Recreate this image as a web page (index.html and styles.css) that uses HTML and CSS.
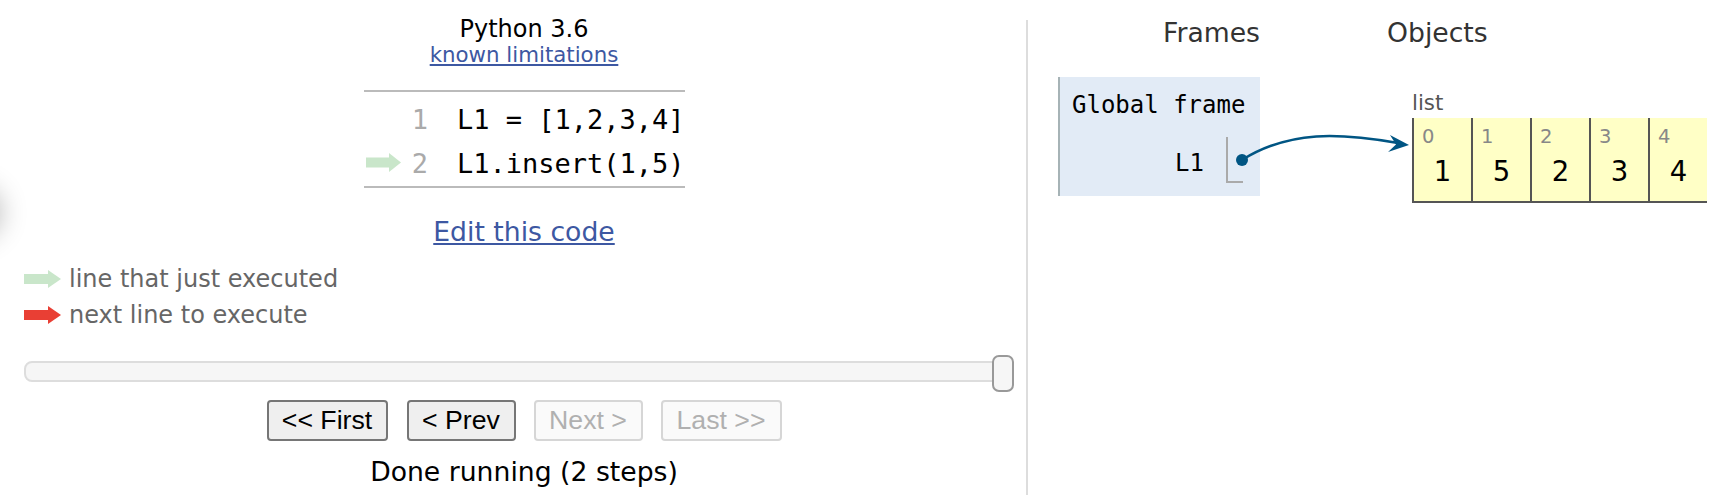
FILE: index.html
```html
<!DOCTYPE html>
<html>
<head>
<meta charset="utf-8">
<link rel="stylesheet" href="styles.css">
</head>
<body>
<div class="shadow-blob"></div>
<div class="page">
  <section class="left">
    <div class="lang">Python 3.6</div>
    <a class="limits" href="#">known limitations</a>
    <div class="code">
      <div class="code-row">
        <span class="gutter"></span>
        <span class="lineno">1</span>
        <span class="src">L1 = [1,2,3,4]</span>
      </div>
      <div class="code-row">
        <span class="gutter">
          <svg class="code-arrow" width="35" height="19" viewBox="0 0 35 19"><rect x="0" y="4.5" width="24" height="10" fill="#c9e6ca"/><polygon points="23,0 35,9.5 23,19" fill="#c9e6ca"/></svg>
        </span>
        <span class="lineno">2</span>
        <span class="src">L1.insert(1,5)</span>
      </div>
    </div>
    <a class="edit" href="#">Edit this code</a>
    <div class="legend">
      <div class="legend-item">
        <svg width="37" height="18" viewBox="0 0 37 18"><rect x="0" y="4" width="25" height="10" fill="#c9e6ca"/><polygon points="24,0 37,9 24,18" fill="#c9e6ca"/></svg>
        <span>line that just executed</span>
      </div>
      <div class="legend-item">
        <svg width="37" height="18" viewBox="0 0 37 18"><rect x="0" y="4" width="25" height="10" fill="#e93f34"/><polygon points="24,0 37,9 24,18" fill="#e93f34"/></svg>
        <span>next line to execute</span>
      </div>
    </div>
    <div class="slider">
      <div class="track"></div>
      <div class="handle"></div>
    </div>
    <div class="buttons">
      <button class="btn btn-wide first">&lt;&lt; First</button>
      <button class="btn btn-narrow">&lt; Prev</button>
      <button class="btn btn-narrow disabled" disabled>Next &gt;</button>
      <button class="btn btn-wide disabled" disabled>Last &gt;&gt;</button>
    </div>
    <div class="status">Done running (2 steps)</div>
  </section>
  <div class="divider"></div>
  <section class="viz">
    <div class="frames-col">
      <div class="col-head">Frames</div>
      <div class="frame">
        <div class="frame-title">Global frame</div>
        <div class="var-row">
          <span class="var-name">L1</span>
          <span class="var-ptr"></span>
        </div>
      </div>
    </div>
    <div class="objects-col">
      <div class="col-head">Objects</div>
      <div class="heap">
        <div class="type-label">list</div>
        <div class="list">
          <div class="cell"><span class="idx">0</span><span class="val">1</span></div>
          <div class="cell"><span class="idx">1</span><span class="val">5</span></div>
          <div class="cell"><span class="idx">2</span><span class="val">2</span></div>
          <div class="cell"><span class="idx">3</span><span class="val">3</span></div>
          <div class="cell"><span class="idx">4</span><span class="val">4</span></div>
        </div>
      </div>
    </div>
  </section>
</div>
<svg class="connector" width="1726" height="495" viewBox="0 0 1726 495">
  <path d="M1242,160 C1290,130 1340,133 1398,143" fill="none" stroke="#005583" stroke-width="2.6"/>
  <polygon points="1409,145 1390,135 1396,144.5 1388,152" fill="#005583"/>
  <circle cx="1242" cy="160" r="6" fill="#005583"/>
</svg>
</body>
</html>
```

FILE: styles.css
```css
html, body {
  margin: 0;
  padding: 0;
}

body {
  position: relative;
  width: 1726px;
  height: 495px;
  overflow: hidden;
  background: #ffffff;
  color: #000000;
  font-family: "DejaVu Sans", Verdana, sans-serif;
}

.shadow-blob {
  position: absolute;
  left: -70px;
  top: 185px;
  width: 70px;
  height: 55px;
  border-radius: 50%;
  background: #ffffff;
  box-shadow: 0 0 28px rgba(0, 0, 0, 0.3);
}

.page {
  display: flex;
  height: 495px;
}

/* ---------- left pane ---------- */
.left {
  margin-left: 24px;
  width: 1000px;
  display: flex;
  flex-direction: column;
  align-items: center;
  padding-top: 15px;
}

.lang {
  font-size: 24px;
  line-height: 28px;
}

.limits {
  font-size: 21.33px;
  line-height: 24px;
  color: #3d58a2;
  text-decoration: underline;
}

.code {
  margin-top: 23px;
  width: 321px;
  border-top: 2px solid #bbbbbb;
  border-bottom: 2px solid #bbbbbb;
  padding-top: 6px;
  font-family: "DejaVu Sans Mono", monospace;
  font-size: 27px;
  line-height: 44px;
}

.code-row {
  display: flex;
  align-items: center;
  height: 44px;
}

.gutter {
  width: 48px;
  box-sizing: border-box;
  padding-left: 2px;
  display: flex;
  align-items: center;
}

.code-arrow {
  display: block;
  margin-top: -4px;
}

.lineno {
  width: 17px;
  text-align: right;
  color: #aaaaaa;
}

.src {
  margin-left: 29px;
  white-space: pre;
}

.edit {
  margin-top: 28px;
  font-size: 26.67px;
  line-height: 32px;
  color: #3d58a2;
  text-decoration: underline;
}

.legend {
  align-self: flex-start;
  margin-top: 13px;
  font-size: 24px;
  line-height: 36px;
  color: #666666;
}

.legend-item {
  display: flex;
  align-items: center;
  gap: 8px;
}

.legend-item svg {
  display: block;
}

.slider {
  align-self: flex-start;
  position: relative;
  margin-top: 28px;
  width: 980px;
  height: 21px;
}

.track {
  height: 21px;
  box-sizing: border-box;
  border: 2px solid #dddddd;
  border-radius: 8px;
  background: #f6f6f6;
}

.handle {
  position: absolute;
  right: -10px;
  top: -6px;
  width: 22px;
  height: 37px;
  box-sizing: border-box;
  border: 2px solid #999999;
  border-radius: 7px;
  background: #f6f6f6;
}

.buttons {
  margin-top: 18px;
  display: flex;
  gap: 18px;
}

.btn {
  height: 41px;
  box-sizing: border-box;
  padding: 0;
  text-align: center;
  font-family: "Liberation Sans", Arial, sans-serif;
  font-size: 26.67px;
  border: 2px solid #767676;
  border-radius: 4px;
  background: #efefef;
  color: #000000;
}

.btn-wide {
  width: 121px;
}

.btn-narrow {
  width: 109px;
}

.btn.first {
  margin-right: 1px;
}

.btn.disabled {
  border-color: #d6d6d6;
  background: #fafafa;
  color: #b0b0b0;
}

.status {
  margin-top: 15px;
  font-size: 26.67px;
  line-height: 32px;
}

/* ---------- divider ---------- */
.divider {
  width: 2px;
  margin-left: 2px;
  margin-top: 20px;
  background: #dddddd;
}

/* ---------- visualization ---------- */
.viz {
  display: flex;
  padding-top: 17px;
}

.col-head {
  font-size: 26.67px;
  line-height: 32px;
  color: #333333;
}

.frames-col {
  padding-left: 30px;
  width: 202px;
}

.frames-col .col-head {
  text-align: right;
}

.frame {
  margin-top: 28px;
  background: #e2ebf6;
  border-left: 2px solid #a6b3b6;
  padding: 13px 0 13px 12px;
}

.frame-title {
  font-family: "DejaVu Sans Mono", monospace;
  font-size: 24px;
  line-height: 30px;
}

.var-row {
  display: flex;
  justify-content: flex-end;
  align-items: flex-start;
  margin-top: 17px;
  padding-right: 17px;
}

.var-name {
  font-family: "DejaVu Sans Mono", monospace;
  font-size: 24px;
  line-height: 30px;
  padding-top: 11px;
  margin-right: 22px;
}

.var-ptr {
  width: 15px;
  height: 44px;
  border-left: 2px solid #aaaaaa;
  border-bottom: 2px solid #aaaaaa;
}

.objects-col {
  margin-left: 127px;
}

.heap {
  margin-top: 42px;
  padding-left: 25px;
}

.type-label {
  font-size: 21.33px;
  line-height: 24px;
  color: #555555;
}

.list {
  margin-top: 3px;
  display: flex;
}

.cell {
  width: 57px;
  display: flex;
  flex-direction: column;
  background: #ffffc6;
  border-left: 2px solid #555555;
  border-bottom: 2px solid #555555;
}

.idx {
  font-size: 19.5px;
  line-height: 22px;
  padding: 8px 0 0 8px;
  color: #888888;
}

.val {
  margin-top: 7px;
  padding-bottom: 14px;
  font-size: 27.5px;
  line-height: 32px;
  text-align: center;
}

.connector {
  position: absolute;
  left: 0;
  top: 0;
  pointer-events: none;
}
```
